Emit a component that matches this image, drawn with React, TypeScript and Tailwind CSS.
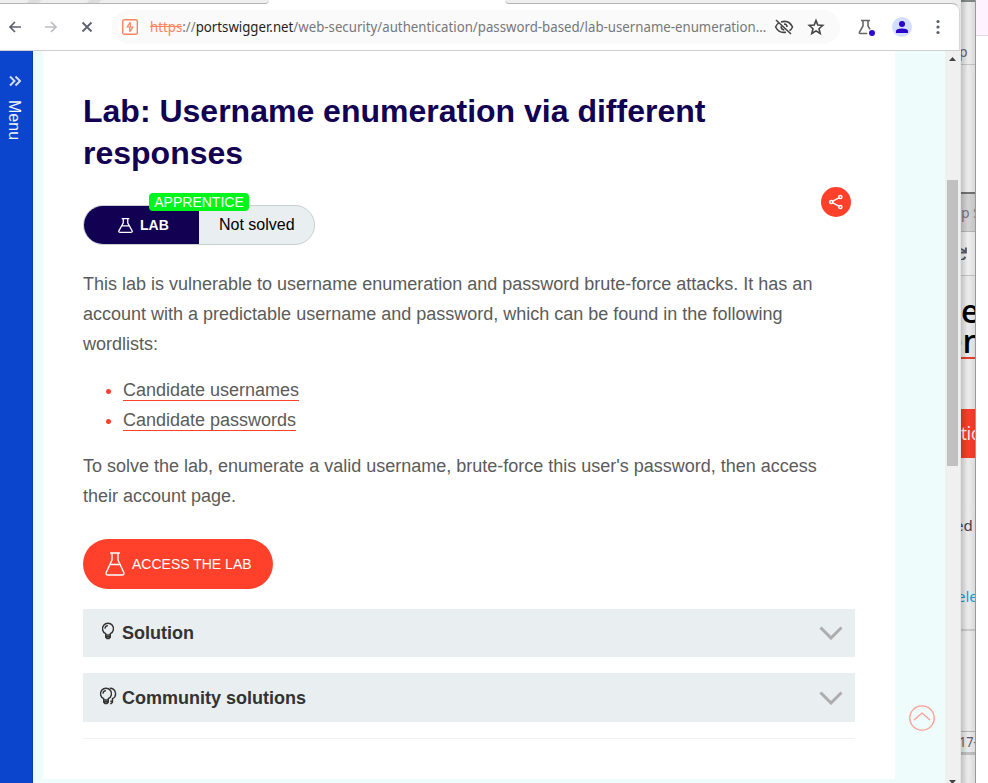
import type { ReactNode } from "react";

function Flask({ className, sw = 1.5 }: { className?: string; sw?: number }) {
  return (
    <svg className={className} viewBox="0 0 20 24" preserveAspectRatio="none" fill="none" stroke="currentColor" strokeWidth={sw} strokeLinejoin="round" strokeLinecap="round">
      <path d="M5.600 1h8.800M7 1v7L1.200 20.500Q.5 23 3 23h14q2.500 0 1.800-2.500L13 8V1M5 12.500h10" />
    </svg>
  );
}

function Bulb({ double = false }: { double?: boolean }) {
  return (
    <svg className={double ? "h-[18px] w-[18px] shrink-0" : "h-[18px] w-[14px] shrink-0"} viewBox={double ? "0 0 18 18" : "0 0 14 18"} fill="none" stroke="#333332" strokeWidth="1.400">
      <path d="M4.700 13v-1.300A5.500 5.500 0 1 1 9.300 11.700V13zM4.700 13v2.200L6 16.500h2l1.300-1.300V13M4.700 14.700h4.600M3.900 6.600A3.200 3.200 0 0 1 6.900 3.600" />
      {double && <path d="M10.800 1.300A5.500 5.500 0 0 1 13.500 11.700v3.500l-1.300 1.300h-1M11.300 14.200h2.200" />}
    </svg>
  );
}

function Toolbar() {
  return (
    <div className="flex h-12 w-full items-center rounded-tr-[8px] border-t border-r border-b border-t-[#b5b5b5] border-r-[#d8d8d8] border-b-[#cfcfcf] bg-white">
      <svg className="ml-2 h-[14px] w-[14px] shrink-0" viewBox="0 0 14 14" fill="none" stroke="#5d6070" strokeWidth="1.700">
        <path d="M13 7H2M7 2L2 7l5 5" />
      </svg>
      <svg className="ml-[22px] h-[14px] w-[14px] shrink-0" viewBox="0 0 14 14" fill="none" stroke="#bdbdc2" strokeWidth="1.700">
        <path d="M1 7h11M7 2l5 5-5 5" />
      </svg>
      <svg className="ml-[22px] h-[14px] w-[14px] shrink-0" viewBox="0 0 14 14" fill="none" stroke="#5d6070" strokeWidth="1.800">
        <path d="M2.500 2.500l9 9M11.500 2.500l-9 9" />
      </svg>
      <div className="ml-[18px] flex h-[34px] w-[728px] shrink-0 items-center rounded-full bg-[#fafafa]">
        <div className="ml-[6px] flex size-6 shrink-0 items-center justify-center rounded-full bg-white">
          <svg className="size-4" viewBox="0 0 16 16" fill="none" stroke="#ff835f">
            <rect x=".7" y=".7" width="14.600" height="14.600" rx="1.600" strokeWidth="1.400" />
            <path d="M8.300 3.200L5.200 8h5.600L7.700 12.800M8.300 3.200V8M7.700 8v4.800" strokeWidth="1.200" />
          </svg>
        </div>
        <div className="ml-2 w-[620px] shrink-0 font-['Noto_Sans',sans-serif] text-sm leading-5 whitespace-nowrap text-[#77777a]">
          <div className="w-[660px] origin-left scale-x-[0.946]">
            <span className="text-[#ff835f] line-through">https</span>://<span className="text-[#1f1f23]">portswigger.net</span>/web-security/authentication/password-based/lab-username-enumeration…
          </div>
        </div>
        <svg className="ml-1 size-5 shrink-0" viewBox="0 0 20 20" fill="none" stroke="#454547" strokeWidth="1.600">
          <path d="M2 3l15 14M7 5q8-2.500 11.500 5-1 2.300-3 3.700M4.500 6Q2.700 7.500 1.600 10q3.400 6.500 10.400 5.200M10 7q3 0 3 3M7.200 9.300Q7 12.600 10.300 13" />
        </svg>
        <svg className="ml-[13px] size-[18px] shrink-0" viewBox="0 0 18 18" fill="none" stroke="#454547" strokeWidth="1.600">
          <path d="M9 2.500l1.800 4.600 4.900.4-3.700 3.200 1.200 4.800L9 12.900l-4.200 2.600L6 10.700 2.300 7.500l4.900-.4z" />
        </svg>
      </div>
      <div className="relative ml-[18px] h-4 w-4 shrink-0 text-[#65666c]">
        <svg className="h-4 w-[15px]" viewBox="0 0 15 16" fill="none" stroke="currentColor" strokeWidth="1.600">
          <path d="M3 1.500h9M5 1.500v5.500L1.500 13q-.6 1.500.8 1.500h7M10 1.500v5.500l2 3.300" />
        </svg>
        <span className="absolute -right-[1px] -bottom-[1px] size-[6px] rounded-full bg-[#2b0bd3]" />
      </div>
      <svg className="ml-[18px] size-5 shrink-0" viewBox="0 0 20 20">
        <circle cx="10" cy="10" r="10" fill="#d2defb" />
        <circle cx="10" cy="7" r="3" fill="#2900cc" />
        <path d="M4 16v-2q0-2.500 6-2.500t6 2.500v2z" fill="#2900cc" />
      </svg>
      <svg className="ml-6 h-4 w-1 shrink-0" viewBox="0 0 4 16" fill="#5d6070">
        <circle cx="2" cy="2.500" r="1.600" /><circle cx="2" cy="8" r="1.600" /><circle cx="2" cy="13.500" r="1.600" />
      </svg>
    </div>
  );
}

function Accordion({ title, icon, className }: { title: string; icon: ReactNode; className: string }) {
  return (
    <div className={"flex w-[772px] items-center bg-[#e9eef1] " + className}>
      <div className="flex w-[39px] items-center justify-center pb-1 pl-[11px]">{icon}</div>
      <span className="text-lg font-bold text-[#333332]">{title}</span>
      <svg className="mr-3 ml-auto h-[14px] w-6" viewBox="0 0 24 14" fill="none" stroke="#adadad" strokeWidth="3">
        <path d="M1.500 1.500L12 12 22.500 1.500" />
      </svg>
    </div>
  );
}

function LabPage() {
  return (
    <main className="h-[728px] w-[852px] shrink-0 bg-white pl-10 text-lg leading-[30px] text-[#5b5b5b]">
      <h1 className="w-[700px] pt-[39px] text-[32px] leading-[42px] font-bold text-[#120052]">Lab: Username enumeration via different responses</h1>
      <div className="flex w-[768px] items-start justify-between pt-[13px]">
        <div className="relative mt-[18px] flex h-10 w-[232px] overflow-visible">
          <div className="flex w-full overflow-hidden rounded-full border border-[#c8d0d4] bg-[#e9eef1]">
            <div className="flex w-[115px] items-center bg-[#120052] pl-[34px] text-white">
              <Flask className="h-[15px] w-[15px]" sw={1.800} />
              <b className="ml-[7px] text-sm">LAB</b>
            </div>
            <span className="ml-5 self-center text-base leading-6 text-black">Not solved</span>
          </div>
          <span className="absolute -top-3 left-[66px] flex h-[18px] w-[100px] items-center justify-center rounded-[4px] bg-[#00f51d] text-sm text-white">APPRENTICE</span>
        </div>
        <div className="flex size-[30px] items-center justify-center rounded-full bg-[#ff402b]">
          <svg className="h-4 w-4" viewBox="0 0 16 16" fill="none" stroke="white" strokeWidth="1.500">
            <circle cx="3.300" cy="8" r="1.600" /><circle cx="12.300" cy="3" r="1.600" /><circle cx="12.300" cy="13" r="1.600" />
            <path d="M4.700 7.200l6.200-3.400M4.700 8.800l6.200 3.400" />
          </svg>
        </div>
      </div>
      <p className="w-[750px] pt-6">This lab is vulnerable to username enumeration and password brute-force attacks. It has an account with a predictable username and password, which can be found in the following wordlists:</p>
      <ul className="pt-4">
        {["Candidate usernames", "Candidate passwords"].map((item) => (
          <li key={item} className="flex h-[30px] items-center">
            <span className="mt-[3px] ml-[23px] size-[5px] rounded-full bg-[#ff402b]" />
            <a className="ml-3 h-[22px] border-b border-[#ff402b] leading-[23px]">{item}</a>
          </li>
        ))}
      </ul>
      <p className="w-[750px] pt-4">To solve the lab, enumerate a valid username, brute-force this user's password, then access their account page.</p>
      <button className="mt-7 flex h-[50px] w-[190px] items-center rounded-full bg-[#ff402b] pl-[22px] text-sm text-white">
        <Flask className="h-6 w-5" sw={1.400} />
        <span className="ml-[7px]">ACCESS THE LAB</span>
      </button>
      <Accordion className="mt-5 h-12" title="Solution" icon={<Bulb />} />
      <Accordion className="mt-4 h-[49px]" title="Community solutions" icon={<Bulb double />} />
      <div className="mt-4 w-[772px] border-t border-[#f1f1f1]" />
    </main>
  );
}

function BackgroundStrip() {
  return (
    <div className="relative flex h-[783px] w-[15px] shrink-0 flex-col overflow-hidden border-r border-[#999] bg-[#f3f3f3] font-['Noto_Sans',sans-serif] whitespace-nowrap">
      <div className="h-[65px] shrink-0 border-t-2 border-b border-t-[#88908c] border-b-[#ccc] pt-10 text-sm leading-5 text-[#656870]"><span className="-ml-[2px]">p</span></div>
      <div className="h-[127px] shrink-0" />
      <div className="h-10 shrink-0 border-t-2 border-b border-t-[#777] border-b-[#bcbcbc] bg-[#dadada] pt-[9px] text-sm leading-5 text-[#777987]">p S</div>
      <div className="h-11 shrink-0 border-b border-[#ccc] bg-[#f7f7f7] pt-[15px]">
        <svg className="-ml-[7px] size-[13px]" viewBox="0 0 12 12" fill="none" stroke="#5d6070" strokeWidth="1.800"><path d="M11 .5v4.500H6.500M10.500 5a5 5 0 1 0 0 4" /></svg>
      </div>
      <div className="h-[83px] shrink-0 border-b-2 border-[#f04232] pt-5 font-['Open_Sans',sans-serif] text-[32px] leading-[30px] font-semibold text-black">
        <div className="-ml-5">pe</div><div className="-ml-[17px]">en</div>
      </div>
      <div className="mt-[50px] h-[49px] shrink-0 bg-[#ff402b] text-lg leading-[48px] text-white"><div className="origin-left scale-x-90">tio</div></div>
      <div className="h-[173px] shrink-0 border-b-2 border-[#d2d2d2] pt-[57px] text-[15px] leading-5 text-[#444]">
        <div className="-ml-[6px]">ed</div><div className="mt-[51px] -ml-[4px] text-[#13a5d8]">ele</div>
      </div>
      <div className="h-[100px] shrink-0" />
      <div className="h-6 shrink-0 border-t border-b-[3px] border-t-[#bcbcbc] border-b-[#c8c8c8] text-[15px] leading-[19px] text-[#5d6070]"><div className="-ml-[2px] origin-left scale-x-[0.85]">17-</div></div>
      <div className="absolute inset-0 bg-linear-to-r from-black/20 via-black/3 to-black/10" />
    </div>
  );
}

export default function App() {
  return (
    <div className="flex h-[783px] w-[988px] overflow-hidden bg-white font-['Liberation_Sans',sans-serif]">
      <div className="w-[961px] shrink-0 border-r border-[#e5e5e5] bg-[#ededed]">
        <div className="relative flex h-[3px]">
          <div className="flex h-1 shrink-0 bg-white">
            <div className="flex h-1 w-[269px] gap-12 rounded-br-[6px] border-b border-[#b5b5b5] bg-[#eee] pl-7">
              <span className="h-[3px] w-3 -skew-x-[45deg] bg-[#ddd]" /><span className="h-[3px] w-3 -skew-x-[45deg] bg-[#ddd]" />
            </div>
            <div className="h-1 w-[236px]" />
            <div className="h-1 w-[447px] rounded-bl-[6px] border-b border-[#b5b5b5] bg-[#eee]" />
          </div>
        </div>
        <Toolbar />
        <div className="flex h-[732px]">
          <aside className="flex w-[33px] shrink-0 flex-col items-center border-r border-[#073cb7] bg-[#0b45cd] pt-6 pr-[3px] text-[#f0f4ff]">
            <svg className="h-3 w-3" viewBox="0 0 12 12" fill="none" stroke="#d3dbef" strokeWidth="2"><path d="M1 1.500L5.500 6 1 10.500M6.500 1.500L11 6l-4.500 4.500" /></svg>
            <span className="mt-[13px] mr-[2px] text-base leading-5 [writing-mode:vertical-rl]">Menu</span>
          </aside>
          <div className="flex w-[912px] shrink-0 items-start bg-[#effcfc] pl-[10px]">
            <LabPage />
            <svg className="mt-[654px] ml-[14px] h-[26px] w-[26px] shrink-0" viewBox="0 0 26 26" fill="none" stroke="#ff9b90" strokeWidth="1.300"><circle cx="13" cy="13" r="12.200" /><path d="M5 15l8-7 8 7" /></svg>
          </div>
          <div className="flex w-[15px] shrink-0 flex-col items-center bg-[#f0f0f0] pt-[6px]">
            <svg className="h-1 w-[7px] shrink-0" viewBox="0 0 7 4" fill="#444"><path d="M0 4l3.500-4L7 4z" /></svg>
            <div className="mt-[119px] h-[286px] w-[11px] shrink-0 bg-[#c1c1c1]" />
            <svg className="mt-[314px] h-1 w-[7px] shrink-0" viewBox="0 0 7 4" fill="#444"><path d="M0 0h7L3.500 4z" /></svg>
          </div>
        </div>
      </div>
      <BackgroundStrip />
      <div className="w-3 shrink-0">
        <div className="h-9 border-b border-[#e3d7e4] bg-[#fff2ff]" />
      </div>
    </div>
  );
}
